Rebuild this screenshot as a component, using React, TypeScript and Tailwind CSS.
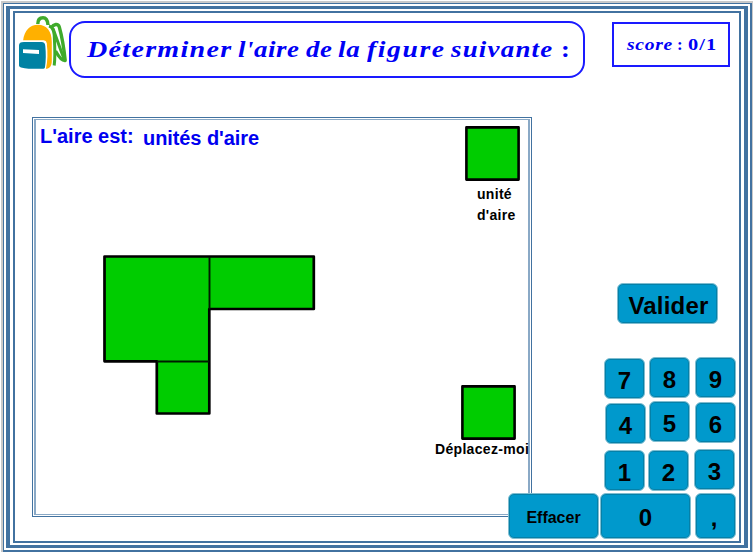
import React from "react";

type KeyProps = { label: string; className: string };

function Key({ label, className }: KeyProps) {
  return (
    <button
      type="button"
      className={`flex shrink-0 items-center justify-center rounded-[6px] border border-[#7fbdd0] bg-[#0099cc] font-bold whitespace-nowrap text-black shadow-[inset_0_0_0_1px_#0580a8] ${className}`}
    >
      {label}
    </button>
  );
}

function Backpack() {
  return (
    <svg width="50" height="56" viewBox="18 15 50 56" className="mt-[2px] ml-[3px] shrink-0">
      <g fill="none" stroke="#3faa2b" strokeLinejoin="round">
        <path d="M37.8 24C37.8 19.5 40 17.8 43 17.8S47.6 19.5 48 25" strokeWidth="3.4" />
        <path d="M49 26C52.5 27 53.8 30 54.2 35C54.7 44 55.5 56 54.2 65.5" strokeWidth="3" />
        <path d="M51.5 27.5C53.5 24.3 58 23 59.3 27C61.8 36 64 49 65.2 60.5C61.5 61 58 55.5 55.5 51" strokeWidth="3.4" />
        <path d="M53 28.5C56.5 38 60.5 50 64.5 60" strokeWidth="3" />
      </g>
      <path d="M23 41C24.5 30 30 24.8 38 24.8C46.5 24.8 51.8 31 51.8 42V61C51.8 66 49.5 69 45 69L46.5 43Z" fill="#ffb000" />
      <path d="M19 40.2H42.5C45.5 40.2 46.5 41 46.8 44C47.8 52 47.8 61 45.8 69.5H23C20 69 19 68 19 66Z" fill="#fff" />
      <path d="M19 45.5C19 43 20.5 42 24 42H41.5C44 42 45 43 45.3 46C46 53 46 61 45 67C44.8 68.6 44 68.8 42 68.8C34 69 27 68.8 21 67.4C19.5 67 19 66.5 19 65Z" fill="#0082a3" />
      <path d="M23 49.2L39 50V54L23 53Z" fill="#fff" />
    </svg>
  );
}

const words = [
  { text: "Déterminer", box: "w-[150.5px]", run: "tracking-[1.1px] scale-x-[1.17]" },
  { text: "l'aire", box: "w-[68px]", run: "tracking-[0.5px] scale-x-[1.12]" },
  { text: "de", box: "w-[32px]", run: "tracking-[0.4px] scale-x-[1.12]" },
  { text: "la", box: "w-[29px]", run: "tracking-[0.8px] scale-x-[1.12]" },
  { text: "figure", box: "w-[84.5px]", run: "tracking-[1.4px] scale-x-[1.15]" },
  { text: "suivante", box: "w-[110px]", run: "tracking-[1.1px] scale-x-[1.12]" },
  { text: ":", box: "w-[8px]", run: "not-italic scale-x-[1.1]" },
];

function Header() {
  return (
    <header className="flex h-[104px] items-start font-['Liberation_Serif',serif] font-bold text-[#0000f5]">
      <Backpack />
      <h1 className="mt-[8px] ml-px flex h-[57px] w-[516px] shrink-0 items-center rounded-[16px] border-2 border-[#1a1aff] pl-[16px] pb-px text-[24px] leading-none italic">
        {words.map((w) => (
          <span key={w.text} className={`shrink-0 ${w.box}`}>
            <span className={`inline-block origin-left whitespace-nowrap ${w.run}`}>{w.text}</span>
          </span>
        ))}
      </h1>
      <div className="mt-[9px] ml-[27px] flex h-[45px] w-[118px] shrink-0 items-center border-2 border-[#1a1aff] pb-px pl-[13px] text-[17px] leading-none">
        <span className="w-[50px] shrink-0">
          <span className="inline-block origin-left scale-x-[1.15] tracking-[0.6px] italic">score</span>
        </span>
        <span className="w-[11px] shrink-0">:</span>
        <span className="origin-left scale-x-[1.2] text-[17px] tracking-[0.9px]">0/1</span>
      </div>
    </header>
  );
}

function Figure() {
  return (
    <svg width="214" height="162" viewBox="102 254 214 162" className="shrink-0">
      <path
        d="M104.5 256.5H313.8V309H209.3V413.5H156.8V361.3H104.5Z"
        fill="#00cc00"
        stroke="#000"
        strokeWidth="2.7"
        strokeLinejoin="round"
      />
      <path d="M209.5 257V309M157 361.5H209" stroke="#001a00" strokeWidth="1.9" />
    </svg>
  );
}

function UnitSquare() {
  return (
    <svg width="55" height="55" viewBox="0 0 55 55" className="shrink-0">
      <rect x="1.4" y="1.4" width="52.2" height="52.2" fill="#00cc00" stroke="#000" strokeWidth="2.6" strokeLinejoin="round" />
    </svg>
  );
}

function Board() {
  return (
    <section className="h-[400px] w-[500px] shrink-0 border border-[#4272a0] bg-white p-px">
      <div className="flex h-full border-x-2 border-y border-[#8aa9c6]">
        <div className="w-[392px] shrink-0">
          <p className="flex pt-[5px] pl-[4px] text-[20px] leading-[23px] font-bold whitespace-nowrap text-[#0000f0]">
            <span className="w-[103px]">L'aire est:</span>
            <span className="mt-[2px] tracking-[-0.08px]">unités d'aire</span>
          </p>
          <div className="mt-[104px] ml-[66px]">
            <Figure />
          </div>
        </div>
        <div className="w-[100px] shrink-0 text-[14px] font-bold">
          <div className="mt-[6px] ml-[37px]">
            <UnitSquare />
            <p className="mt-[3px] pl-[12px] leading-[21px] tracking-[0.3px]">
              unité
              <br />
              d'aire
            </p>
          </div>
          <div className="mt-[159px] ml-[33px]">
            <UnitSquare />
            <p className="mt-px -ml-[26px] leading-[17px] tracking-[0.32px] whitespace-nowrap">Déplacez-moi</p>
          </div>
        </div>
      </div>
    </section>
  );
}

function Keypad() {
  return (
    <section className="relative z-10 w-[207px] shrink-0 text-[24px] leading-none">
      <Key label="Valider" className="mt-[166px] ml-[85px] h-[41px] w-[101px] pt-1 pl-[2px] tracking-[0.2px]" />
      <div className="mt-[33px] ml-[72px] flex items-start">
        <Key label="7" className="mt-px h-[41px] w-[41px] pt-1" />
        <Key label="8" className="ml-[4px] h-[41px] w-[41px] pt-1" />
        <Key label="9" className="ml-[5px] h-[41px] w-[41px] pt-1" />
      </div>
      <div className="mt-[2px] ml-[73px] flex items-start">
        <Key label="4" className="mt-[2px] h-[41px] w-[41px] pt-1" />
        <Key label="5" className="ml-[3px] h-[41px] w-[41px] pt-1" />
        <Key label="6" className="mt-px ml-[5px] h-[41px] w-[41px] pt-1" />
      </div>
      <div className="mt-[5px] ml-[72px] flex items-start">
        <Key label="1" className="mt-px h-[41px] w-[41px] pt-1" />
        <Key label="2" className="mt-px ml-[3px] h-[41px] w-[41px] pt-1" />
        <Key label="3" className="ml-[5px] h-[41px] w-[41px] pt-1" />
      </div>
      <div className="mt-[2px] -ml-[24px] flex items-start">
        <Key label="Effacer" className="h-[46px] w-[91px] pt-[3px] text-[16px]" />
        <Key label="0" className="ml-px h-[46px] w-[91px] pt-[3px]" />
        <Key label="," className="ml-[4px] h-[46px] w-[41px] pt-[3px] pr-[8px] pl-[5px]" />
      </div>
    </section>
  );
}

export default function App() {
  return (
    <div className="h-[553px] w-[754px] overflow-hidden bg-white pt-px pr-px pb-px pl-px font-['Liberation_Sans',sans-serif] text-black">
      <div className="h-full border-t-2 border-r border-l-2 border-[#c9c9c9]">
        <div className="h-full border border-r-2 border-b-2 border-[#4272a0] p-[2px]">
          <div className="h-full border-x-4 border-y-3 border-[#4272a0] px-[3px] py-[2px]">
            <main className="h-full border-2 border-[#4272a0]">
              <Header />
              <div className="ml-[17px] flex items-start">
                <Board />
                <Keypad />
              </div>
            </main>
          </div>
        </div>
      </div>
    </div>
  );
}
